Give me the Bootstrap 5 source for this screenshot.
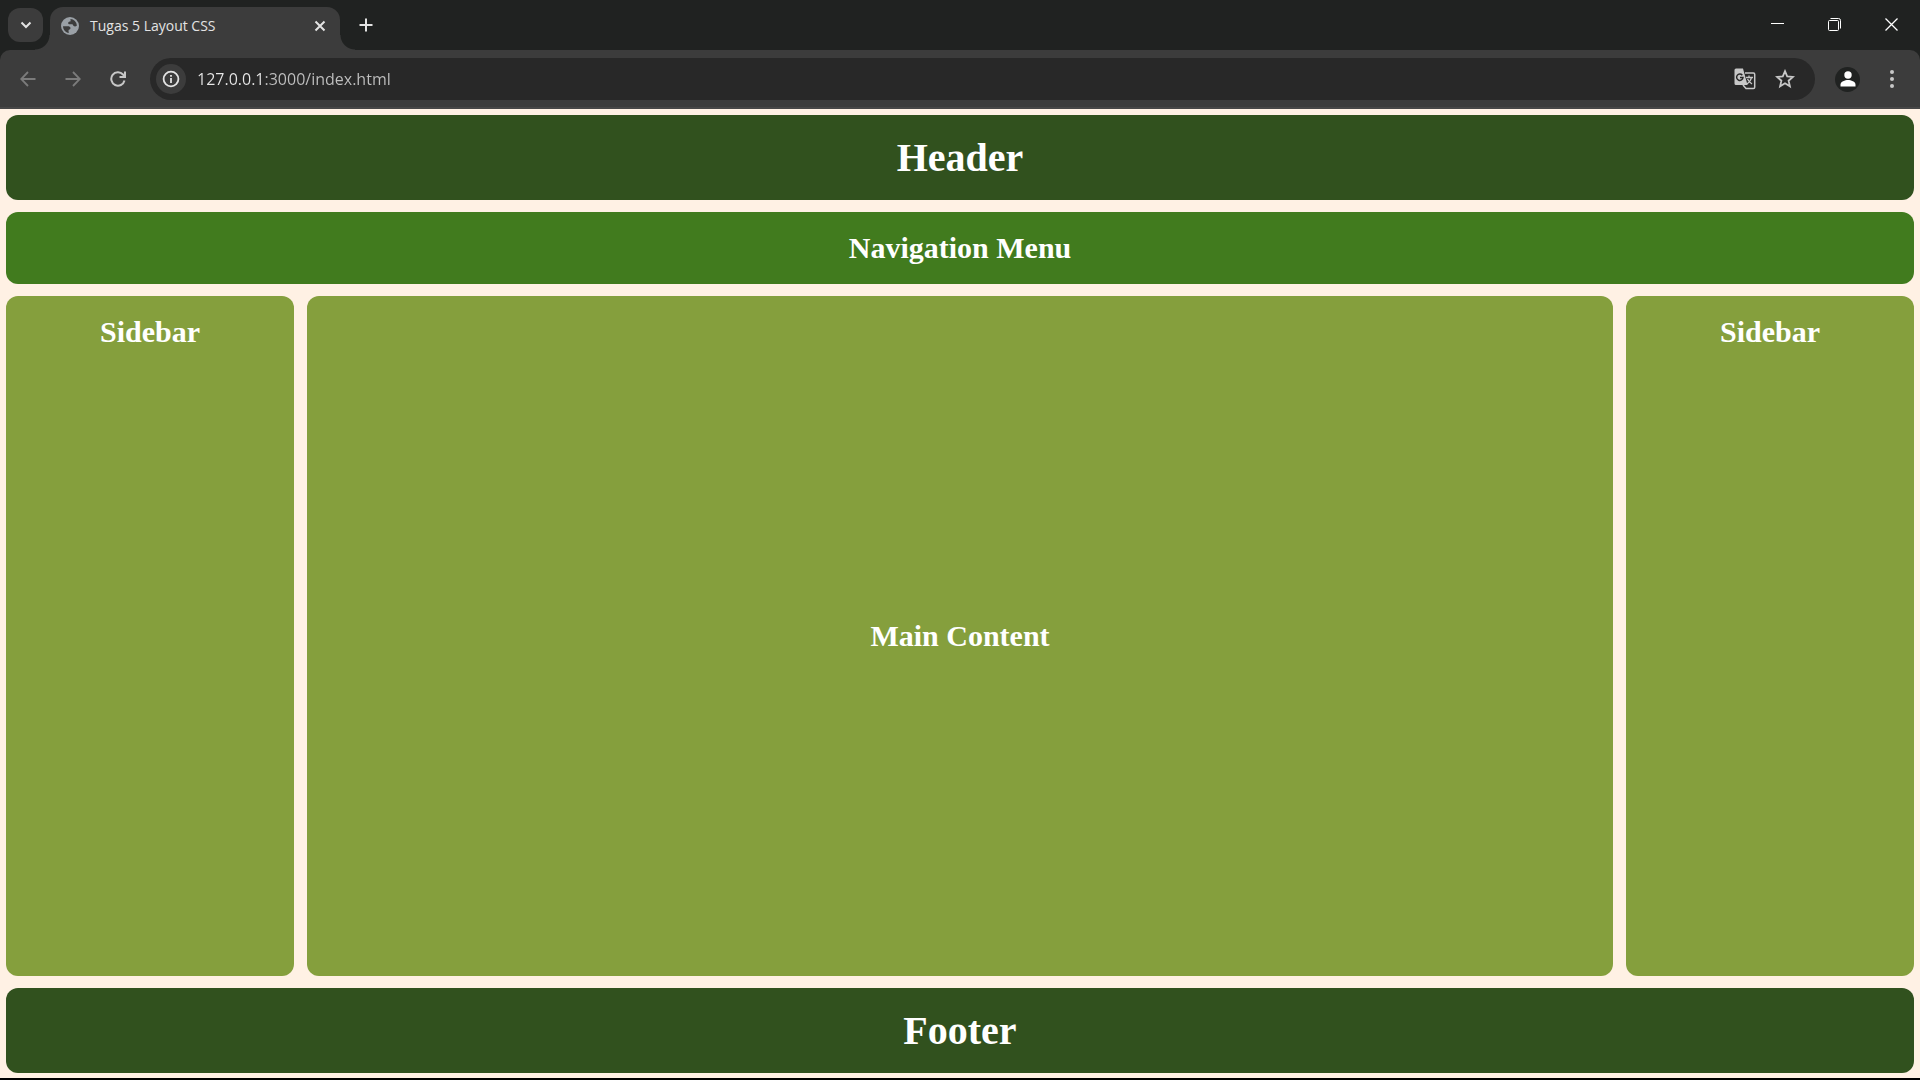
<!DOCTYPE html>
<html lang="en">
<head>
<meta charset="utf-8">
<meta name="viewport" content="width=device-width, initial-scale=1">
<title>Tugas 5 Layout CSS</title>
<link href="https://cdn.jsdelivr.net/npm/bootstrap@5.3.0/dist/css/bootstrap.min.css" rel="stylesheet">
<style>
  body { background: #fff1e4; font-family: "Liberation Serif", serif; }
  svg { display: block; flex: none; }
  .browser-ui { font-family: "Open Sans", sans-serif; background: #202221; }
  .browser-ui button { border: 0; background: transparent; padding: 0; color: #e3e3e3; }

  /* tab strip */
  .tab-strip { height: 50px; padding-left: 8px; }
  .browser-ui .tab-search { width: 35px; height: 34px; border-radius: 12px; background: #3c3c3c; }
  .tab-item { width: 290px; height: 43px; margin-left: 7px; padding: 0 12px 6px 11px; background: #3c3c3c; border-radius: 13px 13px 0 0; gap: 11px; }
  .tab-item::before, .tab-item::after { content: ""; position: absolute; bottom: 0; width: 15px; height: 15px; }
  .tab-item::before { right: 100%; background: radial-gradient(circle at 0 0, transparent 14px, #3c3c3c 15px); }
  .tab-item::after { left: 100%; background: radial-gradient(circle at 100% 0, transparent 14px, #3c3c3c 15px); }
  .tab-label { font-size: 14px; line-height: 20px; color: #e3e3e3; }
  .browser-ui .tab-btn { width: 16px; height: 16px; }
  .new-tab { margin-left: 18px; }
  .browser-ui .win-btn { width: 57px; height: 48px; color: #fff; }

  /* toolbar */
  .tool-bar { height: 59px; padding: 1px 10px 0 10px; background: #3c3c3c; border-bottom: 2px solid #474747; border-radius: 10px 10px 0 0; }
  .nav-buttons { gap: 9px; }
  .browser-ui .tool-btn { width: 36px; height: 36px; color: #c7c7c7; }
  .browser-ui .tool-btn:disabled { color: #7b7b7b; }
  .address-bar { height: 42px; border-radius: 21px; background: #282828; margin: 0 14px; padding: 0 12px 0 6px; }
  .address-actions { gap: 4px; }
  .browser-ui .site-info { width: 30px; height: 30px; border-radius: 50%; background: #3c3c3c; }
  .address-input { border: 0; outline: 0; padding: 0; margin-left: 11px; font-size: 16px; line-height: 24px; color: #e3e3e3;
    background: linear-gradient(to right, #e8e8e8 67px, #c0c0c0 67px); -webkit-background-clip: text; background-clip: text; -webkit-text-fill-color: transparent; }
  .browser-ui .avatar-btn { width: 25px; height: 25px; border-radius: 50%; background: #202221; margin-left: 6px; margin-right: 14px; }

  /* page */
  .page-area { padding: 6px 6px 5px; gap: 12px; border-bottom: 2px solid #000; }
  .panel { border-radius: 12px; padding: 20px; text-align: center; color: #fff; }
  .panel h1 { font-size: 40px; line-height: 45px; font-weight: 700; margin: 0; }
  .panel h2 { font-size: 30px; line-height: 32px; font-weight: 700; margin: 0; }
  .dark-green { background: #31511e; }
  .mid-green { background: #417b1e; }
  .olive-green { background: #859f3d; }
  .content-row { gap: 13px; }
  .side-col { width: 15vw; }
</style>
<script src="https://cdn.jsdelivr.net/npm/bootstrap@5.3.0/dist/js/bootstrap.bundle.min.js"></script>
</head>
<body class="d-flex flex-column min-vh-100">
<div class="browser-ui">
  <div class="tab-strip d-flex">
    <button class="tab-search d-flex align-items-center justify-content-center align-self-center" aria-label="Search tabs">
      <svg width="12" height="8" viewBox="0 0 12 8" fill="none" stroke="currentColor" stroke-width="2"><path d="M1.500 1.500 6 6l4.500-4.500"/></svg>
    </button>
    <div class="tab-item position-relative d-flex align-items-center align-self-end">
      <svg width="18" height="18" viewBox="0 0 18 18"><circle cx="9" cy="9" r="9" fill="#9aa0a6"/><path d="M9.500 2a7 7 0 0 1 6.400 6.500c-.8 1-2.200 1.200-3.200.6-.8-.5-.6-1.600-1.500-1.800H8.300C7 7 6.800 5.600 7.700 5c.6-.4 1.600-.2 1.900-1 .2-.6-.3-1.300-.1-2zM2 9.200h4.500c1.800 0 3 .6 3 2 0 1.300-1.800 1-2 2.200-.1.900.3 1.600.3 2.500C4.500 15.500 2.100 12.700 2 9.200z" fill="#3c3c3c"/></svg>
      <span class="tab-label flex-grow-1">Tugas 5 Layout CSS</span>
      <button class="tab-btn d-flex align-items-center justify-content-center" aria-label="Close tab">
        <svg width="12" height="12" viewBox="0 0 12 12" stroke="currentColor" stroke-width="2"><path d="M1.500 1.500l9 9M10.500 1.500l-9 9"/></svg>
      </button>
    </div>
    <button class="tab-btn new-tab d-flex align-items-center justify-content-center align-self-center" aria-label="New tab">
      <svg width="14" height="14" viewBox="0 0 14 14" stroke="currentColor" stroke-width="2"><path d="M7 .5v13M.5 7h13"/></svg>
    </button>
    <div class="d-flex ms-auto">
      <button class="win-btn d-flex align-items-center justify-content-center" aria-label="Minimize">
        <svg width="13" height="13" viewBox="0 0 13 13" stroke="currentColor"><path d="M0 5.500h13"/></svg>
      </button>
      <button class="win-btn d-flex align-items-center justify-content-center" aria-label="Restore">
        <svg width="13" height="13" viewBox="0 0 13 13" fill="none" stroke="currentColor"><rect x=".5" y="2.500" width="10" height="10" rx="1"/><path d="M2.500.5h8a2 2 0 0 1 2 2v8"/></svg>
      </button>
      <button class="win-btn d-flex align-items-center justify-content-center" aria-label="Close window">
        <svg width="13" height="13" viewBox="0 0 13 13" stroke="currentColor" stroke-width="1.300"><path d="M.5.5l12 12M12.500.5l-12 12"/></svg>
      </button>
    </div>
  </div>

  <div class="tool-bar d-flex align-items-center">
    <div class="nav-buttons d-flex">
      <button class="tool-btn d-flex align-items-center justify-content-center" aria-label="Back" disabled>
        <svg width="16" height="16" viewBox="0 0 16 16" fill="none" stroke="currentColor" stroke-width="1.800"><path d="M15.500 8H1.500M8 1 1.200 8 8 15"/></svg>
      </button>
      <button class="tool-btn d-flex align-items-center justify-content-center" aria-label="Forward" disabled>
        <svg width="16" height="16" viewBox="0 0 16 16" fill="none" stroke="currentColor" stroke-width="1.800"><path d="M.5 8h14M8 1l6.800 7L8 15"/></svg>
      </button>
      <button class="tool-btn d-flex align-items-center justify-content-center" aria-label="Reload">
        <svg width="16" height="16" viewBox="0 0 16 16" fill="none" stroke="currentColor" stroke-width="2"><path d="M14.500 9.500A6.700 6.700 0 1 1 13 3.500L14.500 5.200M15 .5v5.500H9.500"/></svg>
      </button>
    </div>
    <div class="address-bar d-flex align-items-center flex-grow-1">
      <button class="site-info d-flex align-items-center justify-content-center" aria-label="Site information">
        <svg width="18" height="18" viewBox="0 0 18 18" fill="none" stroke="#e3e3e3" stroke-width="1.800"><circle cx="9" cy="9" r="7.400"/><path d="M9 8v5M9 5v1.800"/></svg>
      </button>
      <input class="address-input flex-grow-1" type="text" value="127.0.0.1:3000/index.html" aria-label="Address" spellcheck="false">
      <div class="address-actions d-flex">
        <button class="tool-btn d-flex align-items-center justify-content-center" aria-label="Translate">
          <svg width="22" height="22" viewBox="0 0 22 22"><path d="M11 5h8.500a1.200 1.200 0 0 1 1.200 1.200v13.100a1.200 1.200 0 0 1-1.200 1.200H12L9 17" fill="none" stroke="currentColor" stroke-width="1.500"/><path d="M2 .5h7L13.500 17H2A1.500 1.500 0 0 1 .5 15.500V2A1.500 1.500 0 0 1 2 .5z" fill="currentColor"/><path d="M8.300 7.200A3.200 3.200 0 1 0 9 9.500H6" fill="none" stroke="#282828" stroke-width="1.500"/><path d="M12 9.500h7M15 7.500v2M17.500 9.500c-.5 3-2.500 5-4.500 6.500M13.500 11c1 2 3 4 4.500 5" fill="none" stroke="currentColor" stroke-width="1.300"/></svg>
        </button>
        <button class="tool-btn d-flex align-items-center justify-content-center" aria-label="Bookmark">
          <svg width="20" height="20" viewBox="0 0 20 20" fill="none" stroke="currentColor" stroke-width="1.800"><path d="M10 2.200l2.200 5.200 5.800.5-4.400 3.800 1.300 5.600L10 14.300l-4.900 3 1.300-5.600L2 7.900l5.800-.5z"/></svg>
        </button>
      </div>
    </div>
    <button class="avatar-btn d-flex align-items-center justify-content-center" aria-label="Profile">
      <svg width="16" height="16" viewBox="0 0 16 16" fill="#fff"><circle cx="8" cy="4" r="3.700"/><path d="M.5 15.500v-2C.5 10.500 5 9 8 9s7.500 1.500 7.500 4.500v2z"/></svg>
    </button>
    <button class="tool-btn d-flex align-items-center justify-content-center" aria-label="Menu">
      <svg width="4" height="18" viewBox="0 0 4 18" fill="currentColor"><circle cx="2" cy="2" r="2"/><circle cx="2" cy="9" r="2"/><circle cx="2" cy="16" r="2"/></svg>
    </button>
  </div>
</div>

<div class="page-area d-flex flex-column flex-grow-1">
  <header class="panel dark-green"><h1>Header</h1></header>
  <nav class="panel mid-green"><h2>Navigation Menu</h2></nav>
  <div class="content-row d-flex flex-grow-1">
    <aside class="panel olive-green side-col"><h2>Sidebar</h2></aside>
    <main class="panel olive-green flex-grow-1 d-flex align-items-center justify-content-center"><h2>Main Content</h2></main>
    <aside class="panel olive-green side-col"><h2>Sidebar</h2></aside>
  </div>
  <footer class="panel dark-green"><h1>Footer</h1></footer>
</div>
</body>
</html>
